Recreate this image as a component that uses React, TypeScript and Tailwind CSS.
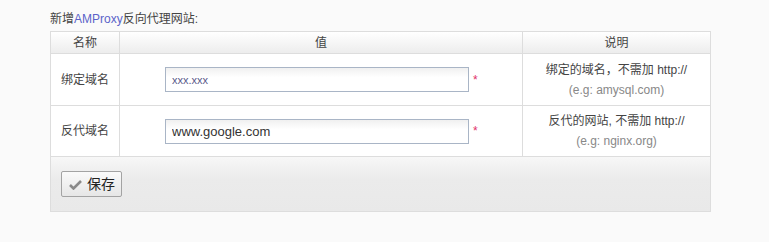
const font = { fontFamily: '"Liberation Sans", Arial, "Noto Sans CJK SC", sans-serif' };

const Row = ({ label, value, small, desc, eg, h }: { label: string; value: string; small?: boolean; desc: string; eg: string; h: string }) => (
    <tr className={`${h} bg-white`}>
        <td className="border border-[#dddddd] text-center text-[12px] text-[#444]">{label}</td>
        <td className="border border-[#dddddd]">
            <div className="flex items-center pl-[45px]">
                <input
                    readOnly
                    value={value}
                    className={`w-[304px] h-[25px] border border-[#a9b5c6] px-[6px] outline-none bg-[linear-gradient(#f0f0f0,#ffffff_40%)] ${small ? "text-[11px] text-[#5a5a8a]" : "text-[13px] text-[#333]"}`}
                    style={font}
                />
                <span className="ml-[4px] text-[12px] text-[#e0306a]">*</span>
            </div>
        </td>
        <td className="border border-[#dddddd] text-center text-[12px] leading-[20px]">
            <div className="text-[#444]">{desc}</div>
            <div className="text-[#888]">{eg}</div>
        </td>
    </tr>
);

export default function App() {
    return (
        <div className="w-[769px] h-[242px] bg-[#fafafa] pt-[10px] pl-[50px]" style={font}>
            <div className="text-[12px] text-[#444] leading-[18px] mb-[3px]">
                新增<span className="text-[#5b63c9]">AMProxy</span>反向代理网站:
            </div>
            <table className="border-collapse w-[661px] table-fixed">
                <colgroup>
                    <col className="w-[69px]" />
                    <col className="w-[403px]" />
                    <col />
                </colgroup>
                <thead>
                    <tr className="h-[22px] bg-[linear-gradient(#ffffff,#ececec)] text-[12px] text-[#444]">
                        <th className="border border-[#dddddd] font-normal">名称</th>
                        <th className="border border-[#dddddd] font-normal">值</th>
                        <th className="border border-[#dddddd] font-normal">说明</th>
                    </tr>
                </thead>
                <tbody>
                    <Row h="h-[52px]" label="绑定域名" value="xxx.xxx" small desc="绑定的域名，不需加 http://" eg="(e.g: amysql.com)" />
                    <Row h="h-[51px]" label="反代域名" value="www.google.com" desc="反代的网站, 不需加 http://" eg="(e.g: nginx.org)" />
                    <tr className="h-[55px] bg-[linear-gradient(#f7f7f7,#ebebeb_40%,#e9e9e9)]">
                        <td colSpan={3} className="border border-[#dddddd] pl-[10px]">
                            <button className="flex items-center gap-[5px] h-[26px] w-[61px] pl-[7px] border border-[#a3a3a3] rounded-[2px] bg-[linear-gradient(#fafafa,#e6e6e6)] text-[14px] text-[#222]">
                                <svg width="13" height="11" viewBox="0 0 13 11">
                                    <path d="M1 6 L4.5 9.5 L12 2" fill="none" stroke="#8a8a8a" strokeWidth="2.6" />
                                </svg>
                                保存
                            </button>
                        </td>
                    </tr>
                </tbody>
            </table>
        </div>
    );
}
